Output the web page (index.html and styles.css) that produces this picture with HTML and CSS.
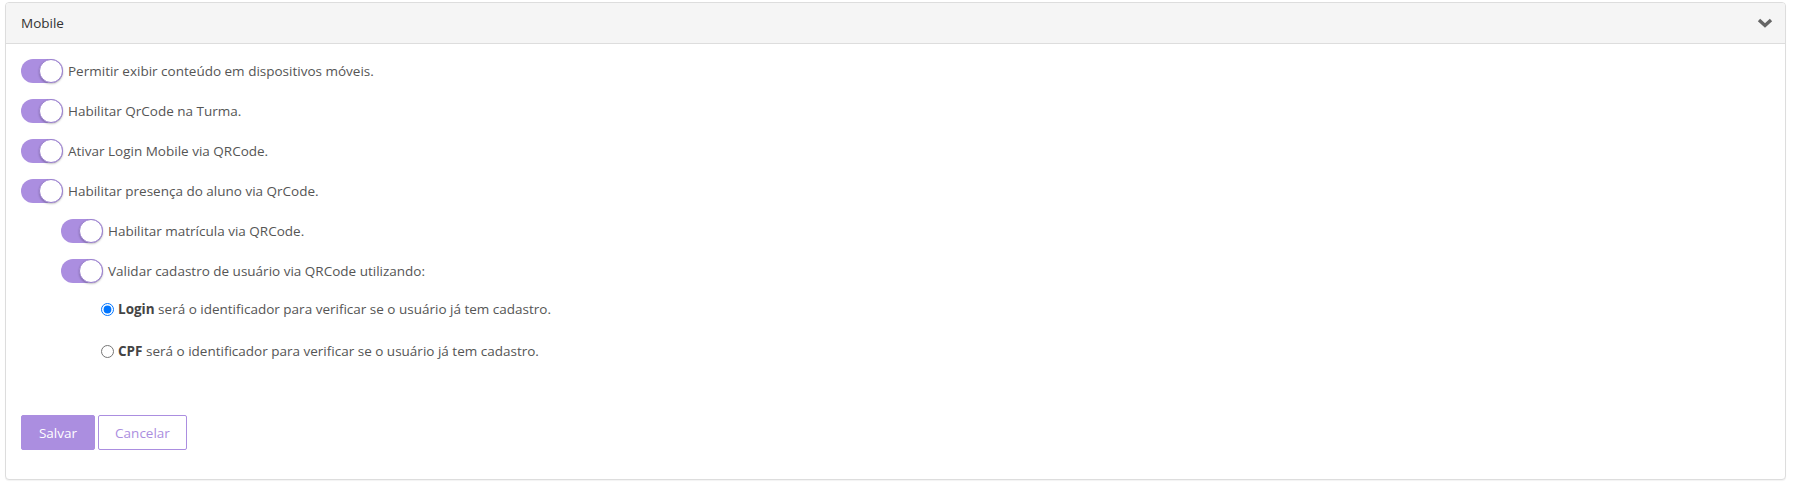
FILE: index.html
```html
<!DOCTYPE html>
<html lang="pt-BR">
<head>
<meta charset="utf-8">
<title>Mobile</title>
<link rel="stylesheet" href="styles.css">
</head>
<body>
<div class="panel">
  <div class="panel-heading">
    <span class="panel-title">Mobile</span>
    <svg class="chevron" width="16" height="10" viewBox="0 0 16 10"><path d="M2 2 L8 7.5 L14 2" fill="none" stroke="#666" stroke-width="3.4" stroke-linejoin="miter"/></svg>
  </div>
  <div class="panel-body">
    <div class="row"><span class="switch"><span class="knob"></span></span><span class="label">Permitir exibir conteúdo em dispositivos móveis.</span></div>
    <div class="row"><span class="switch"><span class="knob"></span></span><span class="label">Habilitar QrCode na Turma.</span></div>
    <div class="row"><span class="switch"><span class="knob"></span></span><span class="label">Ativar Login Mobile via QRCode.</span></div>
    <div class="row"><span class="switch"><span class="knob"></span></span><span class="label">Habilitar presença do aluno via QrCode.</span></div>
    <div class="row indent"><span class="switch"><span class="knob"></span></span><span class="label">Habilitar matrícula via QRCode.</span></div>
    <div class="row indent"><span class="switch"><span class="knob"></span></span><span class="label">Validar cadastro de usuário via QRCode utilizando:</span></div>
    <label class="radio-row"><input type="radio" name="ident" checked><span class="label"><b>Login</b> será o identificador para verificar se o usuário já tem cadastro.</span></label>
    <label class="radio-row"><input type="radio" name="ident"><span class="label"><b>CPF</b> será o identificador para verificar se o usuário já tem cadastro.</span></label>
    <div class="actions"><button class="btn btn-primary">Salvar</button><button class="btn btn-outline">Cancelar</button></div>
  </div>
</div>
</body>
</html>
```

FILE: styles.css
```css
* { box-sizing: border-box; }
html, body { margin: 0; padding: 0; background: #fff; }
body {
  font-family: "Open Sans", "Noto Sans", sans-serif;
  font-size: 13.5px;
  color: #555;
  padding: 2px 8px 3px 5px;
}
.panel {
  border: 1px solid #ddd;
  border-radius: 4px;
  background: #fff;
  box-shadow: 0 1px 1px rgba(0,0,0,0.05);
}
.panel-heading {
  height: 41px;
  background: #f5f5f5;
  border-bottom: 1px solid #ddd;
  border-radius: 3px 3px 0 0;
  display: flex;
  align-items: center;
  justify-content: space-between;
  padding: 0 12px 0 15px;
}
.panel-title { color: #333; font-size: 13.5px; }
.chevron { display: block; }
.panel-body { padding: 15px 15px 29px 15px; }
.row {
  display: flex;
  align-items: center;
  height: 24px;
  margin-bottom: 16px;
}
.row.indent { padding-left: 40px; }
.switch {
  position: relative;
  width: 42px;
  height: 24px;
  border-radius: 12px;
  background: #ab8ee0;
  flex: none;
  margin-right: 5px;
}
.knob {
  position: absolute;
  right: 0;
  top: 0;
  width: 24px;
  height: 24px;
  border-radius: 50%;
  background: #fff;
  border: 1px solid #9a7fcf;
  box-shadow: 0 1px 2px rgba(0,0,0,0.25);
}
.label { white-space: nowrap; }
.radio-row {
  display: flex;
  align-items: center;
  height: 20px;
  padding-left: 80px;
  margin-top: 15px;
  margin-bottom: 22px;
}
.radio-row input { margin: 0 4px 0 0; width: 13px; height: 13px; }
.radio-row b { color: #444; }
.actions { margin-top: 54px; display: flex; gap: 3px; }
.btn {
  font-family: inherit;
  font-size: 13.5px;
  height: 35px;
  border-radius: 2px;
  border: 1px solid #ab8ee0;
  cursor: pointer;
}
.btn-primary { background: #ab8ee0; color: #fff; width: 74px; }
.btn-outline { background: #fff; color: #ab8ee0; width: 89px; }
```
